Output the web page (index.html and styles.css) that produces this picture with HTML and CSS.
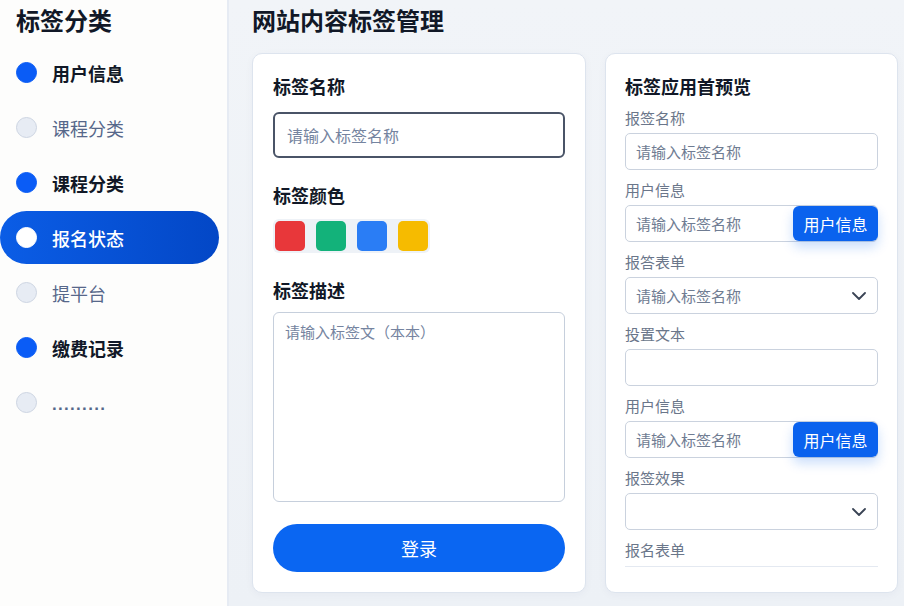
FILE: index.html
```html
<!DOCTYPE html>
<html lang="zh-CN">
<head>
    <meta charset="UTF-8">
    <meta name="viewport" content="width=device-width, initial-scale=1.0">
    <title>网站内容标签管理</title>
    <link rel="stylesheet" href="styles.css">
</head>
<body>
    <aside class="sidebar">
        <h2 class="side-title">标签分类</h2>
        <ul class="cat-list">
            <li class="cat-item on"><span class="dot"></span>用户信息</li>
            <li class="cat-item"><span class="dot"></span>课程分类</li>
            <li class="cat-item on"><span class="dot"></span>课程分类</li>
            <li class="cat-item active"><span class="dot"></span>报名状态</li>
            <li class="cat-item"><span class="dot"></span>提平台</li>
            <li class="cat-item on"><span class="dot"></span>缴费记录</li>
            <li class="cat-item"><span class="dot"></span><span class="more">.........</span></li>
        </ul>
    </aside>

    <main class="main">
        <h1 class="page-title">网站内容标签管理</h1>

        <div class="cards">
            <section class="card edit-card">
                <label class="field-label">标签名称</label>
                <input class="name-input" type="text" placeholder="请输入标签名称">

                <label class="field-label mt">标签颜色</label>
                <div class="swatches">
                    <span class="swatch red"></span>
                    <span class="swatch green"></span>
                    <span class="swatch blue"></span>
                    <span class="swatch yellow"></span>
                </div>

                <label class="field-label mt">标签描述</label>
                <textarea class="desc-input" placeholder="请输入标签文（本本）"></textarea>

                <button class="submit-btn">登录</button>
            </section>

            <section class="card preview-card">
                <h3 class="preview-title">标签应用首预览</h3>

                <div class="row">
                    <div class="row-label">报签名称</div>
                    <div class="box"><span class="ph">请输入标签名称</span></div>
                </div>
                <div class="row">
                    <div class="row-label">用户信息</div>
                    <div class="box"><span class="ph">请输入标签名称</span><span class="box-btn">用户信息</span></div>
                </div>
                <div class="row">
                    <div class="row-label">报答表单</div>
                    <div class="box"><span class="ph">请输入标签名称</span>
                        <svg class="chev" width="14" height="8" viewBox="0 0 14 8" fill="none"><path d="M1 1l6 6 6-6" stroke="#3a4455" stroke-width="1.8" stroke-linecap="round" stroke-linejoin="round"/></svg>
                    </div>
                </div>
                <div class="row">
                    <div class="row-label">投置文本</div>
                    <div class="box"></div>
                </div>
                <div class="row">
                    <div class="row-label">用户信息</div>
                    <div class="box"><span class="ph">请输入标签名称</span><span class="box-btn">用户信息</span></div>
                </div>
                <div class="row">
                    <div class="row-label">报签效果</div>
                    <div class="box">
                        <svg class="chev" width="14" height="8" viewBox="0 0 14 8" fill="none"><path d="M1 1l6 6 6-6" stroke="#3a4455" stroke-width="1.8" stroke-linecap="round" stroke-linejoin="round"/></svg>
                    </div>
                </div>
                <div class="row">
                    <div class="row-label">报名表单</div>
                    <div class="rule"></div>
                </div>
            </section>
        </div>
    </main>
</body>
</html>
```

FILE: styles.css
```css
* {
    box-sizing: border-box;
}
html, body {
    margin: 0;
    padding: 0;
    height: 100%;
}
body {
    display: flex;
    font-family: "Noto Sans CJK SC", "Noto Sans", sans-serif;
    color: #111827;
    background: linear-gradient(180deg, #f1f4f8, #edf1f6);
    overflow: hidden;
}
.sidebar {
    width: 229px;
    flex-shrink: 0;
    background: #fdfdfc;
    border-right: 2px solid #e6ebf3;
    padding-top: 4px;
}
.side-title {
    margin: 0 0 11px 16px;
    font-size: 24px;
    line-height: 31px;
    font-weight: 700;
}
.cat-list {
    list-style: none;
    margin: 0;
    padding: 0;
    display: flex;
    flex-direction: column;
    gap: 2px;
}
.cat-item {
    height: 53px;
    width: 219px;
    display: flex;
    align-items: center;
    gap: 15px;
    padding-left: 16px;
    font-size: 18px;
    color: #56678a;
}
.cat-item.on {
    color: #111827;
    font-weight: 600;
}
.cat-item.active {
    color: #fff;
    font-weight: 500;
    border-radius: 27px;
    background: linear-gradient(90deg, #0b5de6, #0347c6);
}
.dot {
    width: 21px;
    height: 21px;
    border-radius: 50%;
    background: #e7ecf4;
    border: 1px solid #cdd5e2;
}
.on .dot {
    background: #0a5cf6;
    border-color: #0a5cf6;
}
.active .dot {
    background: #fff;
    border-color: #fff;
}
.more {
    font-family: "Liberation Sans", sans-serif;
    font-size: 17px;
    letter-spacing: 1.3px;
    font-weight: 700;
    margin-top: 4px;
}

.main {
    flex: 1;
    padding: 4px 6px 0 23px;
}
.page-title {
    margin: 0 0 18px 0;
    font-size: 24px;
    line-height: 31px;
    font-weight: 700;
}
.cards {
    display: grid;
    grid-template-columns: 334px 293px;
    gap: 19px;
}
.card {
    height: 540px;
    background: #fff;
    border: 1px solid #dde4ee;
    border-radius: 10px;
    box-shadow: 0 2px 8px rgba(40, 60, 100, 0.04);
}

.edit-card {
    padding: 20px 20px 0;
    display: flex;
    flex-direction: column;
}
.field-label {
    font-size: 18px;
    line-height: 24px;
    font-weight: 600;
}
.field-label.mt {
    margin-top: 25px;
}
.name-input {
    margin-top: 14px;
    height: 46px;
    border: 2px solid #4a5467;
    border-radius: 6px;
    padding: 0 12px;
    font-family: inherit;
    font-size: 16px;
    outline: none;
}
.name-input::placeholder,
.desc-input::placeholder {
    color: #7584a0;
}
.swatches {
    margin-top: 12px;
    align-self: flex-start;
    display: flex;
    gap: 11px;
    padding: 2px;
    background: #eef2f7;
    border-radius: 6px;
}
.swatch {
    width: 30px;
    height: 30px;
    border-radius: 5px;
}
.red { background: #e8373a; }
.green { background: #13b27a; }
.blue { background: #2a7df5; }
.yellow { background: #f6bb00; }
.desc-input {
    margin-top: 10px;
    height: 190px;
    border: 1px solid #c6cfdc;
    border-radius: 6px;
    padding: 8px 11px;
    font-family: inherit;
    font-size: 15px;
    resize: none;
    outline: none;
}
.submit-btn {
    margin-top: 22px;
    height: 48px;
    border: none;
    border-radius: 24px;
    background: #0a66f2;
    color: #fff;
    font-family: inherit;
    font-size: 18px;
    cursor: pointer;
}

.preview-card {
    padding: 20px 19px 0;
}
.preview-title {
    margin: 0 0 10px;
    font-size: 18px;
    line-height: 24px;
    font-weight: 700;
}
.row {
    margin-bottom: 10px;
}
.row-label {
    font-size: 15px;
    line-height: 20px;
    color: #6a768a;
}
.box {
    margin-top: 5px;
    height: 37px;
    border: 1px solid #cad2de;
    border-radius: 5px;
    display: flex;
    align-items: center;
    padding-left: 10px;
}
.ph {
    font-size: 15px;
    color: #6f7c92;
}
.box-btn {
    margin: -1px -1px -1px auto;
    height: 35px;
    width: 85px;
    display: flex;
    align-items: center;
    justify-content: center;
    background: #0a62ee;
    color: #fff;
    font-size: 16px;
    border-radius: 6px;
    box-shadow: 0 6px 12px rgba(10, 98, 238, 0.22);
}
.chev {
    margin-left: auto;
    margin-right: 11px;
}
.rule {
    margin-top: 6px;
    height: 1px;
    background: #e4e9f1;
}
```
